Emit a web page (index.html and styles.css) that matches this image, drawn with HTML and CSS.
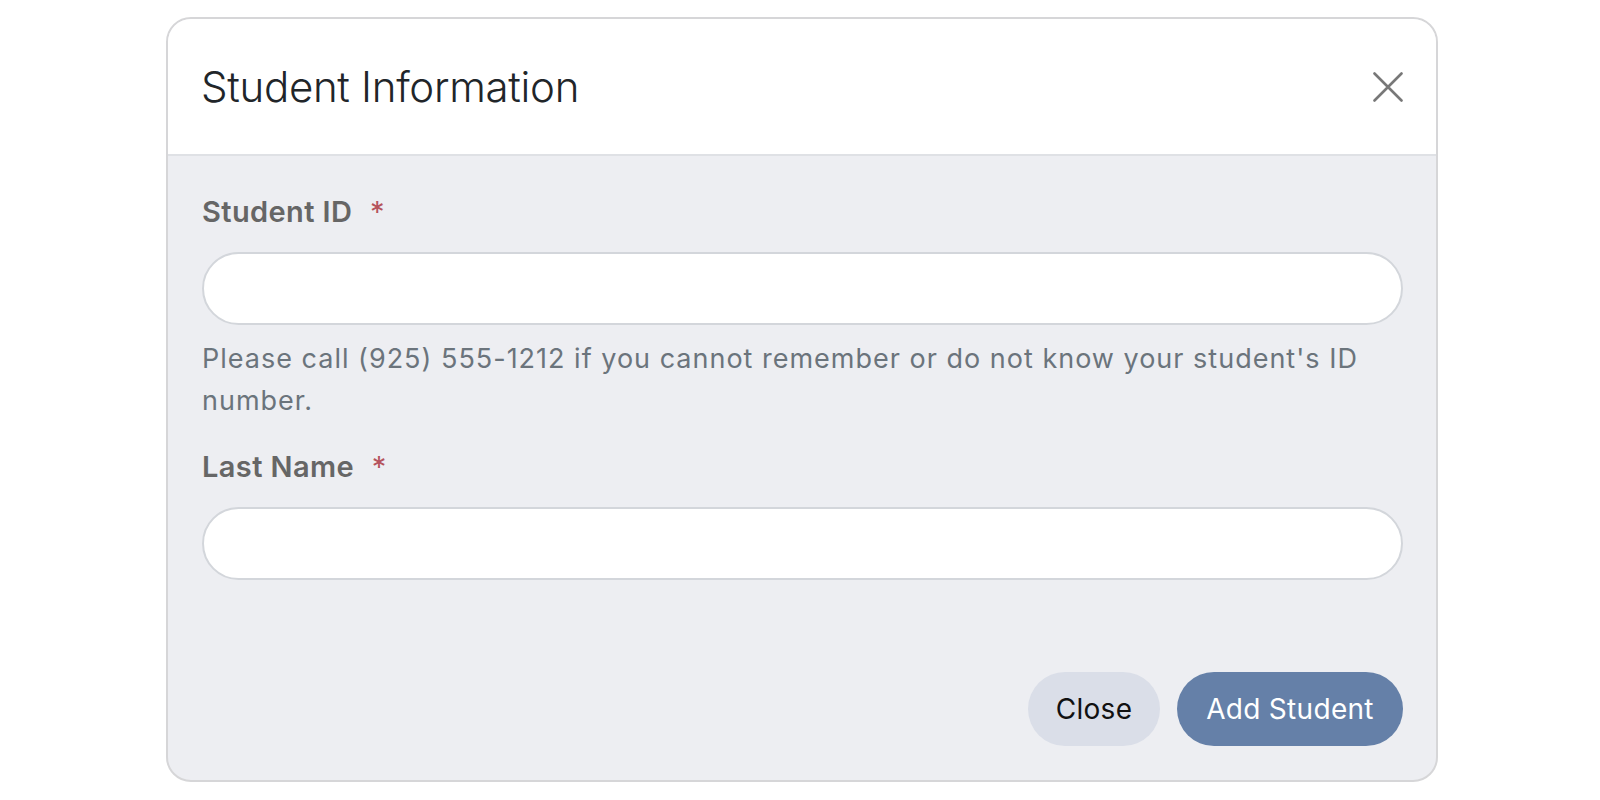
FILE: index.html
```html
<!DOCTYPE html>
<html lang="en">
<head>
<meta charset="utf-8">
<title>Student Information</title>
<link rel="stylesheet" href="styles.css">
</head>
<body>
<div class="modal">
  <div class="modal-header">
    <h5 class="modal-title">Student Information</h5>
    <button class="btn-x" type="button" aria-label="Close">
      <svg width="30" height="30" viewBox="0 0 30 30"><path d="M1.5 1.5 L28.5 28.5 M28.5 1.5 L1.5 28.5" stroke="#787878" stroke-width="2.6" stroke-linecap="round" fill="none"/></svg>
    </button>
  </div>
  <div class="modal-body">
    <div class="field">
      <label class="label">Student ID <span class="req">*</span></label>
      <input class="input" type="text">
      <div class="help">Please call (925) 555-1212 if you cannot remember or do not know your student's ID number.</div>
    </div>
    <div class="field">
      <label class="label">Last Name <span class="req">*</span></label>
      <input class="input" type="text">
    </div>
  </div>
  <div class="modal-footer">
    <button class="btn btn-close" type="button">Close</button>
    <button class="btn btn-primary" type="button">Add Student</button>
  </div>
</div>
</body>
</html>
```
FILE: styles.css
```css
html, body {
  margin: 0;
  padding: 0;
  background: #ffffff;
}
body {
  font-family: Inter, "Noto Sans", "Liberation Sans", sans-serif;
}
.modal {
  box-sizing: border-box;
  margin: 17px 0 0 166px;
  width: 1272px;
  border: 2px solid #d6d6d8;
  border-radius: 25px;
  overflow: hidden;
  background: #edeef2;
}
.modal-header {
  box-sizing: border-box;
  height: 137px;
  background: #ffffff;
  border-bottom: 2px solid #dfe1e5;
  display: flex;
  align-items: center;
  justify-content: space-between;
  padding: 0 33px 0 33px;
}
.modal-title {
  margin: 0;
  font-size: 42px;
  font-weight: 300;
  color: #212529;
  letter-spacing: -0.3px;
}
.btn-x {
  border: 0;
  background: transparent;
  padding: 0;
  width: 30px;
  height: 30px;
  display: flex;
}
.modal-body {
  padding: 35px 33px 0 34px;
}
.field {
  display: flex;
  flex-direction: column;
}
.field + .field {
  margin-top: 24px;
}
.label {
  font-size: 29px;
  line-height: 42px;
  font-weight: 600;
  letter-spacing: 0.4px;
  color: #666666;
  margin-bottom: 19px;
}
.req {
  color: #b5545d;
  font-weight: 400;
  margin-left: 10px;
}
.input {
  box-sizing: border-box;
  height: 73px;
  width: 100%;
  border: 2px solid #d3d6db;
  border-radius: 37px;
  background: #ffffff;
  outline: none;
  padding: 0 30px;
  font-size: 27px;
  font-family: inherit;
}
.help {
  margin-top: 13px;
  font-size: 27px;
  line-height: 42px;
  letter-spacing: 1px;
  color: #6b747c;
}
.modal-footer {
  display: flex;
  justify-content: flex-end;
  gap: 17px;
  padding: 92px 33px 34px 34px;
}
.btn {
  height: 74px;
  border: 0;
  border-radius: 37px;
  font-family: inherit;
  font-size: 28px;
  font-weight: 400;
  letter-spacing: 0.3px;
  padding: 0;
}
.btn-close {
  background: #dadee8;
  color: #111111;
  width: 132px;
}
.btn-primary {
  background: #6580a8;
  color: #ffffff;
  width: 226px;
}
```
